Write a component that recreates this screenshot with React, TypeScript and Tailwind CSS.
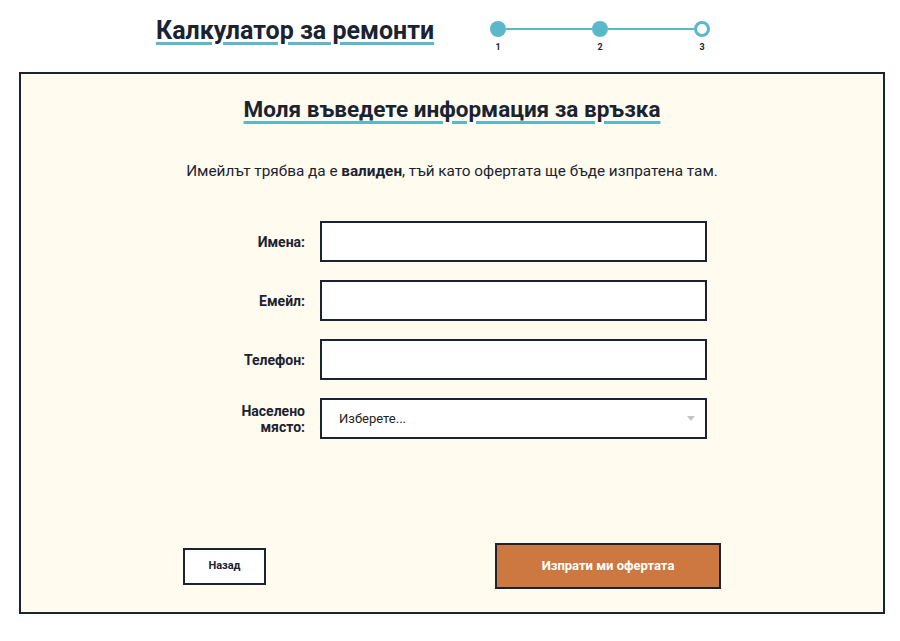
import React from "react";

const steps = [1, 2, 3];

function Stepper() {
	return (
		<div className="flex items-start">
			{steps.map((n, i) => (
				<React.Fragment key={n}>
					<div className="flex flex-col items-center w-4">
						<span
							className={`block w-4 h-4 rounded-full ${
								n === 3 ? "border-[3px] border-[#5ab8c8] bg-white" : "bg-[#5ab8c8]"
							}`}
						/>
						<span className="mt-[6px] text-[9px] font-bold text-[#1a2332] leading-none">{n}</span>
					</div>
					{i < steps.length - 1 && <span className="mt-[7px] block h-[2px] w-[86px] bg-[#5ab8c8]" />}
				</React.Fragment>
			))}
		</div>
	);
}

function Field({ label, children }: { label: React.ReactNode; children: React.ReactNode }) {
	return (
		<div className="flex items-center gap-[15px]">
			<label className="w-[74px] text-right text-[14px] font-bold leading-[16px] text-[#1a2332]">{label}</label>
			{children}
		</div>
	);
}

export default function App() {
	return (
		<div className="min-h-[641px] bg-white font-['Roboto',sans-serif] text-[#1a2332]">
			<header className="flex items-start h-[72px] pl-[156px] pt-[15px]">
				<h1 className="text-[25px] font-bold leading-[32px] underline decoration-[#5ab8c8] decoration-[3px] underline-offset-[3px]">
					Калкулатор за ремонти
				</h1>
				<div className="ml-[56px] pt-[6px]">
					<Stepper />
				</div>
			</header>

			<main className="ml-[19px] mr-[15px] h-[542px] border-2 border-[#1a2332] bg-[#fffbee] flex flex-col items-center">
				<h2 className="mt-[20px] text-[22.5px] font-bold leading-[30px] underline decoration-[#5ab8c8] decoration-[3px] underline-offset-[4px]">
					Моля въведете информация за връзка
				</h2>
				<p className="mt-[37px] text-[15.3px] leading-[20px]">
					Имейлът трябва да е <b>валиден</b>, тъй като офертата ще бъде изпратена там.
				</p>

				<form className="mt-[40px] flex flex-col gap-[18px] ml-[34px]">
					<Field label="Имена:">
						<input type="text" className="w-[387px] h-[41px] border-2 border-[#1a2332] bg-white outline-none" />
					</Field>
					<Field label="Емейл:">
						<input type="email" className="w-[387px] h-[41px] border-2 border-[#1a2332] bg-white outline-none" />
					</Field>
					<Field label="Телефон:">
						<input type="tel" className="w-[387px] h-[41px] border-2 border-[#1a2332] bg-white outline-none" />
					</Field>
					<Field
						label={
							<>
								Населено
								<br />
								място:
							</>
						}
					>
						<div className="w-[387px] h-[41px] border-2 border-[#1a2332] bg-white flex items-center justify-between pl-[17px] pr-[10px]">
							<span className="text-[13px] text-[#222]">Изберете...</span>
							<svg width="8" height="5" viewBox="0 0 8 5">
								<path d="M0 0 L8 0 L4 5 Z" fill="#c4c4c4" />
							</svg>
						</div>
					</Field>
				</form>

				<div className="mt-auto mb-[23px] w-full flex items-center justify-between pl-[162px] pr-[162px]">
					<button className="w-[83px] h-[37px] border-2 border-[#1a2332] bg-white text-[11px] font-bold text-[#1a2332]">
						Назад
					</button>
					<button className="w-[226px] h-[46px] border-2 border-[#1a2332] bg-[#cc7840] text-[13px] font-bold text-white">
						Изпрати ми офертата
					</button>
				</div>
			</main>
		</div>
	);
}
